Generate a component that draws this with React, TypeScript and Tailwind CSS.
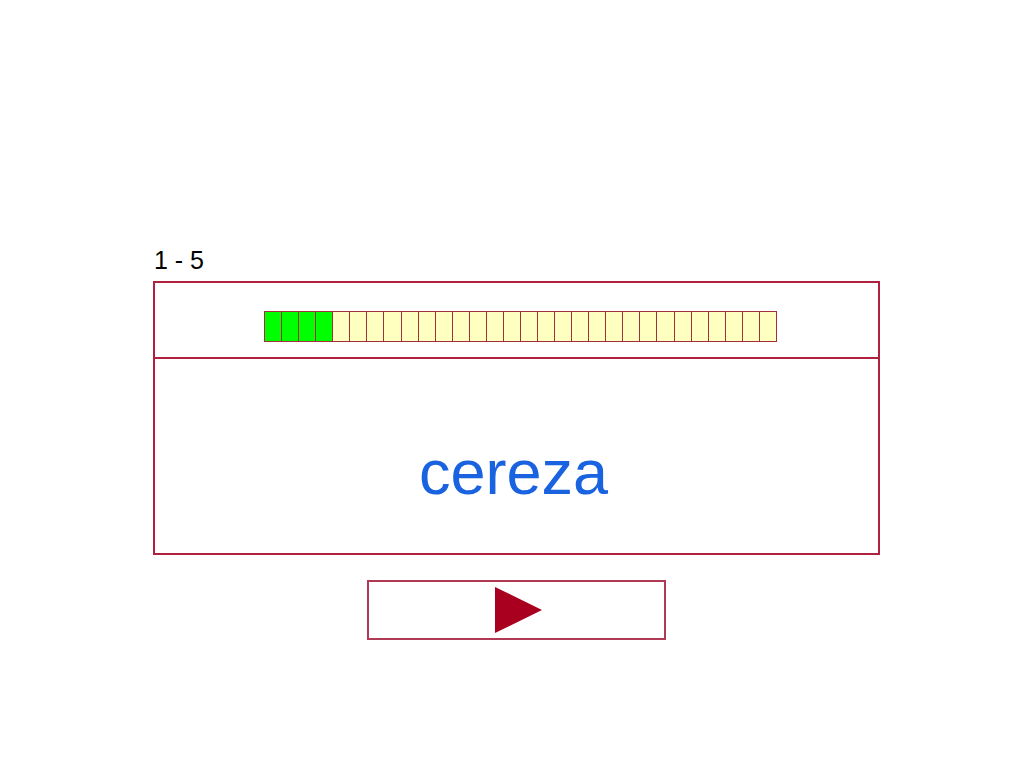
import React from 'react';

const TOTAL = 30;
const DONE = 4;

const App = () => {
  const cells = Array.from({ length: TOTAL }, (_, i) => i);

  return (
    <div className="w-[1024px] h-[768px] bg-white font-['Liberation_Sans',Arial,sans-serif]">
      <div className="pt-[247px] pl-[153px]">
        <div className="text-[25px] leading-[26px] text-black pl-[1px]">1 - 5</div>

        <div className="mt-[8px] w-[727px] border-2 border-[#b0203f]">
          <div className="h-[76px] pt-[28px] pl-[109px] border-b-2 border-[#b0203f]">
            <div className="flex w-[513px] h-[31px] border border-[#a0303a]">
              {cells.map((i) => (
                <div
                  key={i}
                  className={
                    (i < DONE ? 'bg-[#00ff00] ' : 'bg-[#ffffc0] ') +
                    (i < TOTAL - 1 ? 'flex-1 border-r border-[#a0303a]' : 'flex-1')
                  }
                />
              ))}
            </div>
          </div>
          <div className="h-[194px] pt-[83px] pr-[6px] text-center">
            <span className="text-[63px] leading-[60px] text-[#1a63e0]">cereza</span>
          </div>
        </div>

        <div className="mt-[25px] ml-[214px] w-[299px] h-[60px] border-2 border-[#b03a55] flex items-center justify-center">
          <svg width="47" height="46" viewBox="0 0 47 46" className="ml-[4px]">
            <polygon points="0,0 47,23 0,46" fill="#a8001e" />
          </svg>
        </div>
      </div>
    </div>
  );
};

export default App;
